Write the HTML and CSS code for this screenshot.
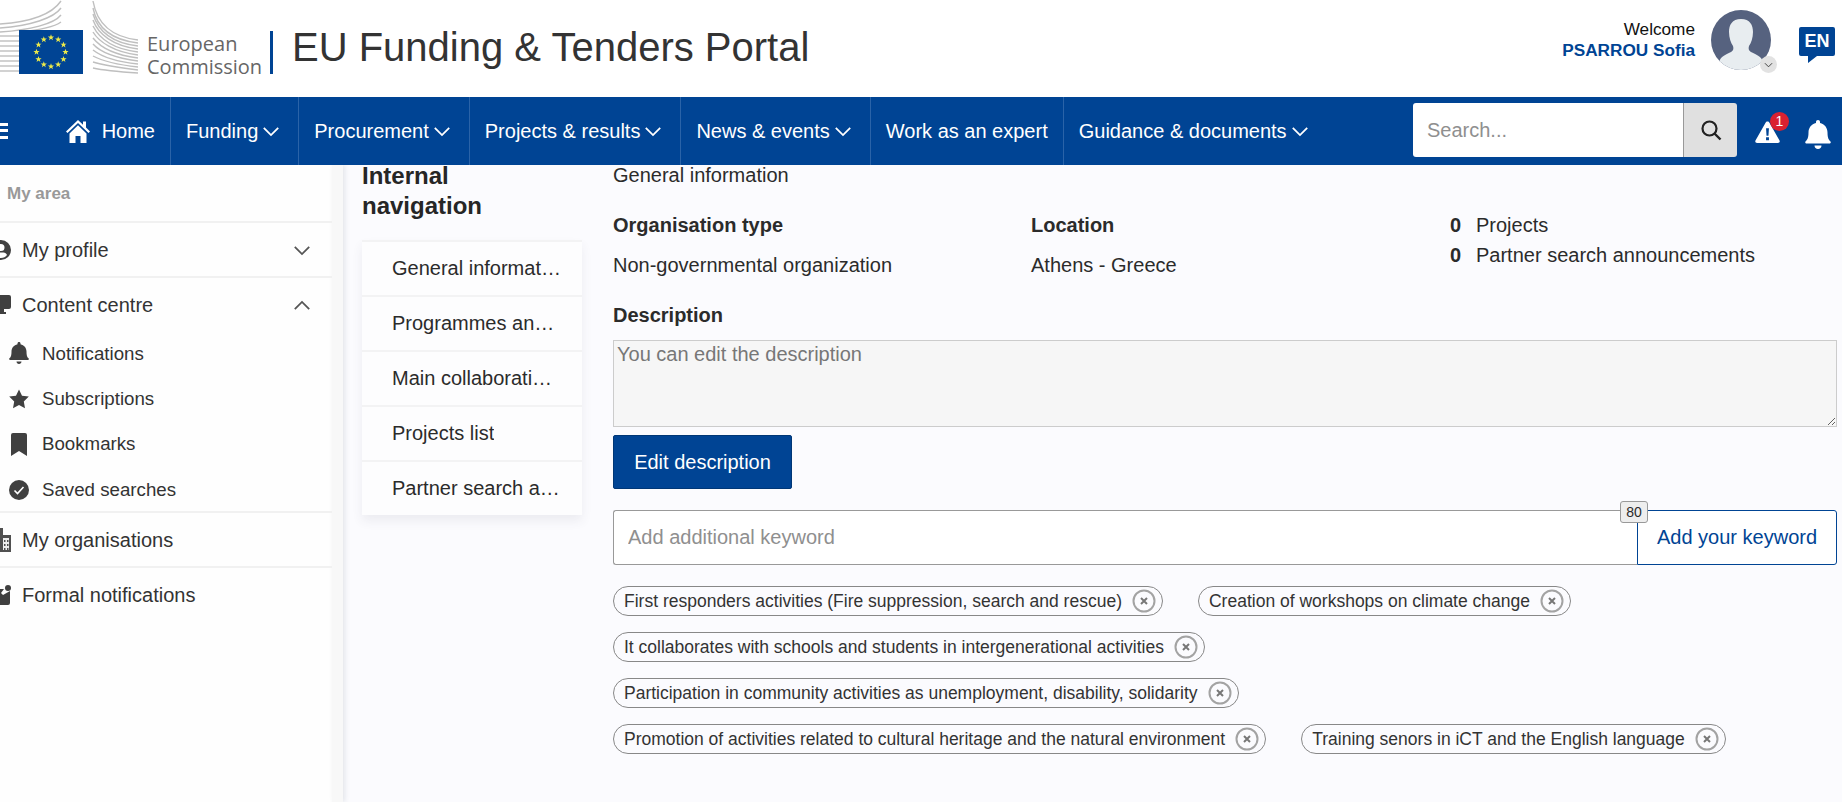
FILE: index.html
```html
<!DOCTYPE html>
<html lang="en">
<head>
  <meta charset="UTF-8" />
  <meta name="viewport" content="width=device-width, initial-scale=1.0"/>
  <title>EU Funding &amp; Tenders Portal</title>
  <link rel="stylesheet" href="styles.css">
</head>
<body>
  <svg class="defs" width="0" height="0">
    <defs>
      <polygon id="st" points="0,-3.200 .8,-1 3.100,-1 1.300,.4 1.900,2.700 0,1.300 -1.900,2.700 -1.300,.4 -3.100,-1 -.8,-1"/>
      <symbol id="chev" viewBox="0 0 20 12"><path d="M2 2l8 8 8-8" fill="none" stroke="currentColor" stroke-width="2"/></symbol>
      <symbol id="close" viewBox="0 0 24 24"><circle cx="12" cy="12" r="10.500" fill="none" stroke="#a3a3a3" stroke-width="2"/><path d="M9 9l6 6M15 9l-6 6" stroke="#777" stroke-width="2"/></symbol>
    </defs>
  </svg>

  <header class="topbar">
    <div class="brand">
      <svg class="logo" width="140" height="76" viewBox="0 0 140 76">
        <g fill="none" stroke="#bfbfbf" stroke-width="1.400">
          <path d="M93 1C97 24 112 37 138 40"/><path d="M93 8C97 28 112 40 138 43"/><path d="M93 14C98 31 112 43 138 46"/><path d="M93 20C98 34 113 46 138 49"/>
          <path d="M93 26C99 38 113 49 138 52"/><path d="M93 32C99 42 114 52 138 55"/><path d="M93 38C100 47 115 55 138 58"/><path d="M93 44C100 52 116 58 138 61"/>
          <path d="M93 50C102 57 118 62 138 64"/><path d="M93 56C104 62 120 65 138 67"/><path d="M93 62C106 66 122 68 138 70"/><path d="M93 68C106 71 122 72 138 73"/>
          <path d="M0 24C30 22 52 14 61 1"/><path d="M0 28C30 26 54 18 61 8"/><path d="M0 32C30 30 54 24 61 15"/><path d="M20 32C40 30 54 27 61 22"/>
          <path d="M0 36h19"/><path d="M0 41h19"/><path d="M0 46h19"/><path d="M0 51h19"/><path d="M0 56h19"/><path d="M0 61h19"/><path d="M0 66h19"/><path d="M0 71h19"/>
        </g>
        <rect x="19" y="30" width="64" height="44" fill="#004494"/>
        <g fill="#ecea4a">
          <use href="#st" x="51" y="37.500"/><use href="#st" x="58.200" y="39.500"/><use href="#st" x="63.500" y="44.700"/><use href="#st" x="65.500" y="52"/><use href="#st" x="63.500" y="59.300"/><use href="#st" x="58.200" y="64.500"/>
          <use href="#st" x="51" y="66.500"/><use href="#st" x="43.800" y="64.500"/><use href="#st" x="38.500" y="59.300"/><use href="#st" x="36.500" y="52"/><use href="#st" x="38.500" y="44.700"/><use href="#st" x="43.800" y="39.500"/>
        </g>
      </svg>
      <div class="ec-name">European<br>Commission</div>
      <h1 class="portal-title">EU Funding &amp; Tenders Portal</h1>
    </div>
    <div class="user">
      <div class="welcome">Welcome<br><strong>PSARROU Sofia</strong></div>
      <div class="avatar">
        <svg width="60" height="60" viewBox="0 0 60 60">
          <defs><clipPath id="av"><circle cx="30" cy="30" r="30"/></clipPath></defs>
          <circle cx="30" cy="30" r="30" fill="#56627f"/>
          <path clip-path="url(#av)" d="M30 9c-9 0-12 6-12 13 0 6 2 11 4 14 1 3 0 5-2 6-6 3-10 4-12 10v8h44v-8c-2-6-6-7-12-10-2-1-3-3-2-6 2-3 4-8 4-14 0-7-3-13-12-13z" fill="#e8edf0"/>
        </svg>
        <span class="avatar-menu"><svg width="9" height="6"><use href="#chev"/></svg></span>
      </div>
      <div class="lang">
        <svg width="36" height="36" viewBox="0 0 36 36"><path d="M2 0h32a2 2 0 0 1 2 2v25a2 2 0 0 1-2 2H18l-9 7v-7H2a2 2 0 0 1-2-2V2a2 2 0 0 1 2-2z" fill="#004494"/></svg>
        <span class="lang-code">EN</span>
      </div>
    </div>
  </header>

  <nav class="navbar">
    <div class="nav-item nav-home">
      <span class="burger"></span>
      <svg class="home-icon" width="24" height="23" viewBox="0 0 24 23"><path d="M12 0L0 11.500l1.500 1.500L12 3l10.500 10L24 11.500 20 7.600V1.500h-3v3.200zM3.500 13.500V23h6v-7h5v7h6v-9.500L12 5.200z" fill="#fff"/></svg>
      Home
    </div>
    <div class="nav-item">Funding<svg class="caret" width="18" height="11"><use href="#chev"/></svg></div>
    <div class="nav-item">Procurement<svg class="caret" width="18" height="11"><use href="#chev"/></svg></div>
    <div class="nav-item">Projects &amp; results<svg class="caret" width="18" height="11"><use href="#chev"/></svg></div>
    <div class="nav-item">News &amp; events<svg class="caret" width="18" height="11"><use href="#chev"/></svg></div>
    <div class="nav-item">Work as an expert</div>
    <div class="nav-item nav-last">Guidance &amp; documents<svg class="caret" width="18" height="11"><use href="#chev"/></svg></div>
    <div class="search">
      <input class="search-input" type="text" placeholder="Search...">
      <span class="search-btn">
        <svg width="22" height="22" viewBox="0 0 22 22"><circle cx="9.500" cy="9.500" r="7" fill="none" stroke="#222" stroke-width="2.200"/><path d="M14.500 14.500l6 6" stroke="#222" stroke-width="2.400"/></svg>
      </span>
    </div>
    <div class="alert">
      <svg width="26" height="24" viewBox="0 0 26 24"><path d="M13 1c1 0 1.600.5 2 1.300l10.500 18.500c.7 1.300-.2 2.700-1.700 2.700H2.200C.7 23.500-.2 22.100.5 20.800L11 2.300C11.400 1.500 12 1 13 1z" fill="#fff"/><path d="M11.500 8h3l-.5 8h-2zM11.500 17.500h3v3h-3z" fill="#004494"/></svg>
      <span class="alert-count">1</span>
    </div>
    <svg class="bell" width="26" height="29" viewBox="0 0 26 29"><path d="M13 0c1.200 0 2 .9 2 2v1c4.500 1 7.500 4.800 7.500 9.500 0 6 1.500 7.500 3 9 .6.700.2 2-1 2H1.500c-1.200 0-1.600-1.300-1-2 1.500-1.500 3-3 3-9C3.500 7.800 6.500 4 11 3V2c0-1.100.8-2 2-2zM9.500 25.500h7c0 2-1.500 3.500-3.500 3.500s-3.500-1.500-3.500-3.500z" fill="#fff"/></svg>
  </nav>

  <div class="page">
    <aside class="sidebar">
      <div class="side-head">My area</div>
      <div class="side-row">
        <svg class="side-icon" width="20" height="20" viewBox="0 0 20 20"><path d="M10 0a10 10 0 1 0 0 20 10 10 0 0 0 0-20zm0 4a3.500 3.500 0 1 1 0 7 3.500 3.500 0 0 1 0-7zm0 14c-2.500 0-4.700-1.200-6-3 .5-1.600 2-2.500 3.500-2.500h5c1.500 0 3 .9 3.500 2.500-1.300 1.800-3.500 3-6 3z" fill="#404040"/></svg>
        My profile
      <svg class="side-caret" width="18" height="11"><use href="#chev"/></svg>
      </div>
      <div class="side-row">
        <svg class="side-icon" width="20" height="20" viewBox="0 0 20 20"><path d="M2 0h16a2 2 0 0 1 2 2v10a2 2 0 0 1-2 2H2a2 2 0 0 1-2-2V2a2 2 0 0 1 2-2zM7 14h6v3H7zM4 17h11v2H4z" fill="#404040"/></svg>
        Content centre
        <svg class="side-caret caret-up" width="18" height="11"><use href="#chev"/></svg>
      </div>
      <ul class="side-sub">
        <li>
          <svg width="20" height="23" viewBox="0 0 20 23"><path d="M10 0c1 0 1.500.7 1.500 1.500v.7c3.500.8 6 3.700 6 7.300 0 5 1.200 6 2.200 7 .5.600.1 1.500-.7 1.500H1c-.8 0-1.200-.9-.7-1.500 1-1 2.200-2 2.200-7 0-3.600 2.500-6.500 6-7.300v-.7C8.500.7 9 0 10 0zM7.500 19.500h5c0 1.500-1.100 2.500-2.500 2.500s-2.500-1-2.500-2.500z" fill="#404040"/></svg>
          Notifications
        </li>
        <li>
          <svg width="20" height="20" viewBox="0 0 20 20"><path d="M10 .5l3 6.200 6.800.9-5 4.800 1.200 6.800-6-3.200-6 3.200 1.200-6.800-5-4.800 6.800-.9z" fill="#404040"/></svg>
          Subscriptions
        </li>
        <li>
          <svg width="20" height="23" viewBox="0 0 20 23"><path d="M4 0h12a2 2 0 0 1 2 2v21l-8-5-8 5V2a2 2 0 0 1 2-2z" fill="#404040"/></svg>
          Bookmarks
        </li>
        <li>
          <svg width="20" height="20" viewBox="0 0 20 20"><circle cx="10" cy="10" r="10" fill="#404040"/><path d="M5.500 10.500l3 3 6-6.500" fill="none" stroke="#fff" stroke-width="1.600"/></svg>
          Saved searches
        </li>
      </ul>
      <div class="side-row">
        <svg class="side-icon" width="20" height="24" viewBox="0 0 20 24"><path d="M9 0h3v8H9zM9 7h11v17H9z" fill="#505050"/><path d="M12 10h6v12h-6z" fill="#eee"/><path d="M13 12h1.500v2H13zM16 12h1.500v2H16zM13 16h1.500v2H13zM16 16h1.500v2H16zM13 20h1.500v2H13zM16 20h1.500v2H16z" fill="#505050"/></svg>
        My organisations
      </div>
      <div class="side-row">
        <svg class="side-icon" width="20" height="20" viewBox="0 0 20 20"><path d="M5 4h8l-3 4 2 2 7-4v12a2 2 0 0 1-2 2H5z" fill="#404040"/><circle cx="17" cy="3" r="3" fill="#404040"/></svg>
        Formal notifications
      </div>
    </aside>
    <div class="gutter"></div>

    <section class="inner-nav">
      <h2 class="inner-title">Internal navigation</h2>
      <ul class="inner-list">
        <li><span>General information</span></li>
        <li><span>Programmes and topics</span></li>
        <li><span>Main collaborations</span></li>
        <li><span>Projects list</span></li>
        <li><span>Partner search announcements</span></li>
      </ul>
    </section>

    <main class="main">
      <p class="section-name">General information</p>
      <div class="facts">
        <div>
          <div class="fact-label">Organisation type</div>
          <div class="fact-value">Non-governmental organization</div>
        </div>
        <div>
          <div class="fact-label">Location</div>
          <div class="fact-value">Athens - Greece</div>
        </div>
        <div class="stats">
          <div class="stat"><b>0</b>Projects</div>
          <div class="stat"><b>0</b>Partner search announcements</div>
        </div>
      </div>
      <div class="desc-label">Description</div>
      <textarea class="desc" readonly placeholder="You can edit the description"></textarea>
      <button class="btn-primary" type="button">Edit description</button>
      <div class="keyword">
        <input class="keyword-input" type="text" placeholder="Add additional keyword">
        <button class="keyword-btn" type="button">Add your keyword</button>
        <span class="keyword-count">80</span>
      </div>
      <div class="chips">
        <span class="chip">First responders activities (Fire suppression, search and rescue)<svg width="24" height="24"><use href="#close"/></svg></span>
        <span class="chip">Creation of workshops on climate change<svg width="24" height="24"><use href="#close"/></svg></span>
        <span class="chip">It collaborates with schools and students in intergenerational activities<svg width="24" height="24"><use href="#close"/></svg></span>
        <span class="chip">Participation in community activities as unemployment, disability, solidarity<svg width="24" height="24"><use href="#close"/></svg></span>
        <span class="chip">Promotion of activities related to cultural heritage and the natural environment<svg width="24" height="24"><use href="#close"/></svg></span>
        <span class="chip">Training senors in iCT and the English language<svg width="24" height="24"><use href="#close"/></svg></span>
      </div>
    </main>
  </div>
</body>
</html>
```

FILE: styles.css
```css
* { box-sizing: border-box; }
html, body { height: 100%; }
body {
  margin: 0;
  font-family: "Liberation Sans", Arial, sans-serif;
  font-size: 20px;
  color: #2b2b2b;
  background: #fbfbfe;
  overflow: hidden;
}
.defs { position: absolute; }
/* Header */
.topbar {
  height: 97px;
  background: #fff;
  display: flex;
  justify-content: space-between;
  position: relative;
  z-index: 5;
}
.brand { display: flex; align-items: flex-start; }
.logo { display: block; flex: none; }
.ec-name {
  font-family: "Open Sans", sans-serif;
  font-size: 20px;
  font-weight: 500;
  line-height: 23px;
  color: #666;
  margin: 32px 0 0 7px;
  width: 123px;
}
.portal-title {
  margin: 31px 0 0;
  padding-left: 19px;
  height: 43px;
  border-left: 3px solid #004494;
  font-size: 40px;
  font-weight: normal;
  line-height: 32px;
  color: #333;
}
.user { display: flex; align-items: flex-start; padding-right: 7px; }
.welcome {
  margin-top: 19px;
  text-align: right;
  font-size: 17.2px;
  line-height: 21px;
  color: #111;
}
.welcome strong { color: #004494; }
.avatar { position: relative; margin: 10px 28px 0 16px; width: 60px; height: 60px; }
.avatar svg { display: block; }
.avatar-menu {
  position: absolute;
  right: -6px; bottom: -3px;
  width: 17px; height: 17px;
  border-radius: 50%;
  background: #e2e2e2;
  color: #333;
  display: flex;
  align-items: center;
  justify-content: center;
}
.lang { position: relative; margin-top: 27px; width: 36px; height: 36px; }
.lang svg { display: block; }
.lang-code {
  position: absolute;
  top: 4px; left: 0; right: 0;
  text-align: center;
  font-size: 18px;
  font-weight: bold;
  line-height: 20px;
  color: #fff;
}
/* Nav */
.navbar {
  height: 68px;
  padding-right: 11px;
  background: #004494;
  color: #fff;
  display: flex;
  position: relative;
  z-index: 5;
}
.nav-item {
  display: flex;
  align-items: center;
  padding: 0 15px;
  border-right: 1px solid #2a63a8;
  white-space: nowrap;
}
.nav-home { width: 171px; padding-left: 0; }
.burger {
  width: 15px; height: 16px;
  margin: 0 65px 0 -6px;
  border-top: 3px solid #fff;
  border-bottom: 3px solid #fff;
  position: relative;
}
.burger::after {
  content: "";
  position: absolute;
  left: 0; right: 0; top: 3px;
  height: 3px;
  background: #fff;
}
.home-icon { margin: 0 12px 0 -7px; flex: none; }
.caret { margin: 0 3px 0 4px; }
.nav-last { border-right: none; }
.search {
  display: flex;
  width: 324px;
  height: 54px;
  margin: 6px 0 0 auto;
  border-radius: 3px;
  overflow: hidden;
}
.search-input {
  flex: 1;
  min-width: 0;
  border: none;
  padding: 0 14px;
  font: inherit;
}
.search-input::placeholder, .keyword-input::placeholder { color: #8f8f8f; opacity: 1; }
.search-btn {
  width: 54px;
  background: #e0e0e0;
  border-left: 1px solid #999;
  display: flex;
  align-items: center;
  justify-content: center;
}
.alert { position: relative; margin: 23px 25px 0 18px; width: 25px; height: 24px; flex: none; }
.alert svg { display: block; width: 25px; }
.alert-count {
  position: absolute;
  top: -8px; right: -9px;
  width: 19px; height: 19px;
  border-radius: 50%;
  background: #da2131;
  font-size: 14px;
  line-height: 19px;
  text-align: center;
}
.bell { margin-top: 23px; flex: none; }
/* Layout below the nav */
.page { display: flex; height: 637px; }
.sidebar { width: 332px; flex: none; background: #fefefe; overflow: hidden; }
.gutter {
  width: 11px;
  flex: none;
  background: #f8f8f8;
  box-shadow: 2px 0 5px rgba(60,70,90,0.12);
  margin-right: 19px;
}
.side-head {
  height: 56px;
  padding: 20px 0 0 7px;
  font-size: 17px;
  line-height: 18px;
  font-weight: bold;
  color: #999;
}
.side-row {
  height: 55px;
  padding-top: 1px;
  display: flex;
  align-items: center;
  border-top: 2px solid #f1f1f1;
  position: relative;
  padding-left: 22px;
  color: #333;
}
.side-icon { position: absolute; left: -9px; }
.side-caret { position: absolute; right: 21px; color: #555; }
.caret-up { transform: rotate(180deg); }
.side-sub { list-style: none; margin: 0; padding: 0 0 0 9px; height: 180px; }
.side-sub li {
  height: 45.3px;
  display: flex;
  align-items: center;
  gap: 13px;
  font-size: 18.7px;
  color: #333;
}
.side-sub svg { flex: none; }
/* Inner nav */
.inner-nav { width: 220px; flex: none; margin-right: 31px; }
.inner-title {
  margin: -4px 0 19px;
  width: 160px;
  font-size: 24px;
  line-height: 30px;
  color: #262626;
}
.inner-list {
  list-style: none;
  margin: 0;
  padding: 0;
  background: #fdfdfe;
  box-shadow: 0 6px 10px rgba(60,70,90,0.08);
}
.inner-list li {
  height: 55px;
  display: flex;
  align-items: center;
  border-top: 2px solid #f3f3f4;
  padding: 0 19px 0 30px;
}
.inner-list span { overflow: hidden; white-space: nowrap; text-overflow: ellipsis; }
/* Main */
.main { flex: 1; min-width: 0; padding-right: 5px; }
.section-name { margin: 0 0 28px; line-height: 20px; }
.facts { display: grid; grid-template-columns: 418px 419px 1fr; }
.fact-label, .desc-label { font-weight: bold; line-height: 24px; }
.fact-value { margin-top: 16px; line-height: 24px; }
.stats { display: flex; flex-direction: column; gap: 6px; }
.stat { line-height: 24px; }
.stat b { display: inline-block; width: 26px; }
.desc-label { margin-top: 26px; margin-bottom: 13px; }
.desc {
  display: block;
  width: 100%;
  height: 87px;
  padding: 2px 3px;
  background: #f6f6f6;
  border: 1px solid #ccc;
  font: inherit;
}
.desc::placeholder { color: #777; opacity: 1; }
.btn-primary {
  display: block;
  margin: 8px 0 21px;
  width: 179px;
  height: 54px;
  background: #004494;
  border: 1px solid #003776;
  border-radius: 2px;
  color: #fff;
  font: inherit;
}
.keyword { display: flex; height: 55px; position: relative; }
.keyword-input {
  flex: 1;
  min-width: 0;
  border: 1px solid #999;
  border-right: none;
  border-radius: 3px 0 0 3px;
  padding: 0 14px;
  font: inherit;
  background: #fff;
}
.keyword-btn {
  width: 200px;
  background: #fff;
  border: 1px solid #004494;
  border-radius: 0 3px 3px 0;
  color: #004494;
  font: inherit;
}
.keyword-count {
  position: absolute;
  right: 189px; top: -9px;
  width: 28px; height: 22px;
  background: #eee;
  border: 1px solid #999;
  border-radius: 3px;
  font-size: 14px;
  line-height: 20px;
  text-align: center;
}
.chips { display: flex; flex-wrap: wrap; gap: 16px 35px; margin-top: 21px; }
.chip {
  display: flex;
  align-items: center;
  gap: 10px;
  height: 30px;
  padding: 0 6px 0 10px;
  border: 1px solid #888;
  border-radius: 15px;
  font-size: 17.5px;
  color: #333;
  white-space: nowrap;
}
```
